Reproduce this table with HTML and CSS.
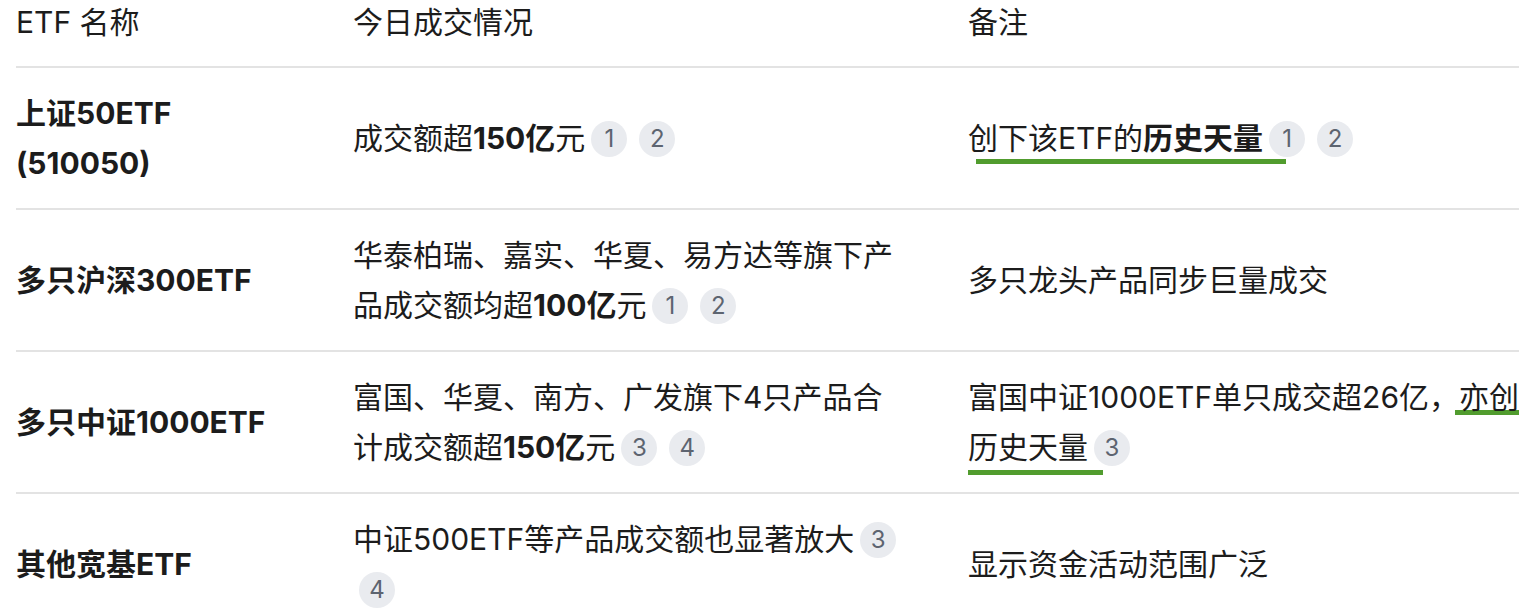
FILE: index.html
```html
<!DOCTYPE html>
<html lang="zh-CN">
<head>
<meta charset="utf-8">
<title>ETF 成交情况</title>
<link rel="stylesheet" href="styles.css">
</head>
<body>
<div class="page">
  <table class="etf-table">
    <colgroup>
      <col class="c-name">
      <col class="c-deal">
      <col class="c-note">
    </colgroup>
    <thead>
      <tr>
        <th class="col-name">ETF 名称</th>
        <th class="col-deal">今日成交情况</th>
        <th class="col-note">备注</th>
      </tr>
    </thead>
    <tbody>
      <tr>
        <td class="col-name"><strong>上证50ETF (510050)</strong></td>
        <td class="col-deal">成交额超<strong>150亿</strong>元<span class="cite">1</span><span class="cite">2</span></td>
        <td class="col-note"><span class="hl hl-a">创下该ETF的<strong>历史天量</strong></span><span class="cite">1</span><span class="cite">2</span></td>
      </tr>
      <tr>
        <td class="col-name"><strong>多只沪深300ETF</strong></td>
        <td class="col-deal">华泰柏瑞、嘉实、华夏、易方达等旗下产品成交额均超<strong>100亿</strong>元<span class="cite">1</span><span class="cite">2</span></td>
        <td class="col-note">多只龙头产品同步巨量成交</td>
      </tr>
      <tr>
        <td class="col-name"><strong>多只中证1000ETF</strong></td>
        <td class="col-deal">富国、华夏、南方、广发旗下4只产品合计成交额超<strong>150亿</strong>元<span class="cite">3</span><span class="cite">4</span></td>
        <td class="col-note">富国中证1000ETF单只成交超26亿，<span class="hl hl-b">亦创</span><span class="hl hl-c">历史天量</span><span class="cite">3</span></td>
      </tr>
      <tr>
        <td class="col-name"><strong>其他宽基ETF</strong></td>
        <td class="col-deal">中证500ETF等产品成交额也显著放大<span class="cite">3</span><span class="cite">4</span></td>
        <td class="col-note">显示资金活动范围广泛</td>
      </tr>
    </tbody>
  </table>
</div>
</body>
</html>
```

FILE: styles.css
```css
* { box-sizing: border-box; }

html, body {
  margin: 0;
  padding: 0;
  background: #ffffff;
}

body {
  font-family: Inter, "Noto Sans CJK SC", "Noto Sans", sans-serif;
  color: #1c1c1c;
  font-size: 30px;
  overflow: hidden;
}

.page {
  padding: 0 12px 0 16px;
}

.etf-table {
  width: 1503px;
  border-collapse: collapse;
  table-layout: fixed;
}

.c-name { width: 337px; }
.c-deal { width: 615px; }
.c-note { width: 551px; }

.etf-table th {
  font-weight: 400;
  text-align: left;
  line-height: 44px;
  padding: 0 0 22px 0;
  border-bottom: 2px solid #e3e3e3;
  white-space: nowrap;
}

.etf-table td {
  line-height: 50px;
  padding: 20px 0;
  vertical-align: middle;
  border-bottom: 2px solid #e3e3e3;
}

.etf-table td.col-name { padding-right: 60px; }
.etf-table td.col-deal { padding-right: 64px; }
.etf-table td.col-note { padding-right: 0; }

strong { font-weight: 700; }

.cite {
  display: inline-flex;
  align-items: center;
  justify-content: center;
  width: 36px;
  height: 36px;
  border-radius: 50%;
  background: #e9ebef;
  color: #5d6470;
  font-family: Inter, "Noto Sans", sans-serif;
  font-size: 24px;
  line-height: 1;
  vertical-align: middle;
  margin: 0 6px;
  position: relative;
  top: -2px;
}

.hl {
  background-image: linear-gradient(#519c2e, #519c2e);
  background-repeat: no-repeat;
  background-position: right bottom;
  background-size: 100% 5px;
}

.hl-a {
  padding-bottom: 8px;
  padding-right: 23px;
  margin-right: -23px;
  background-size: calc(100% - 8px) 5px;
}

.hl-b {
  padding-bottom: 0;
  padding-left: 4px;
  margin-left: -4px;
}

.hl-c {
  padding-bottom: 10px;
  padding-right: 15px;
  margin-right: -15px;
}
```
